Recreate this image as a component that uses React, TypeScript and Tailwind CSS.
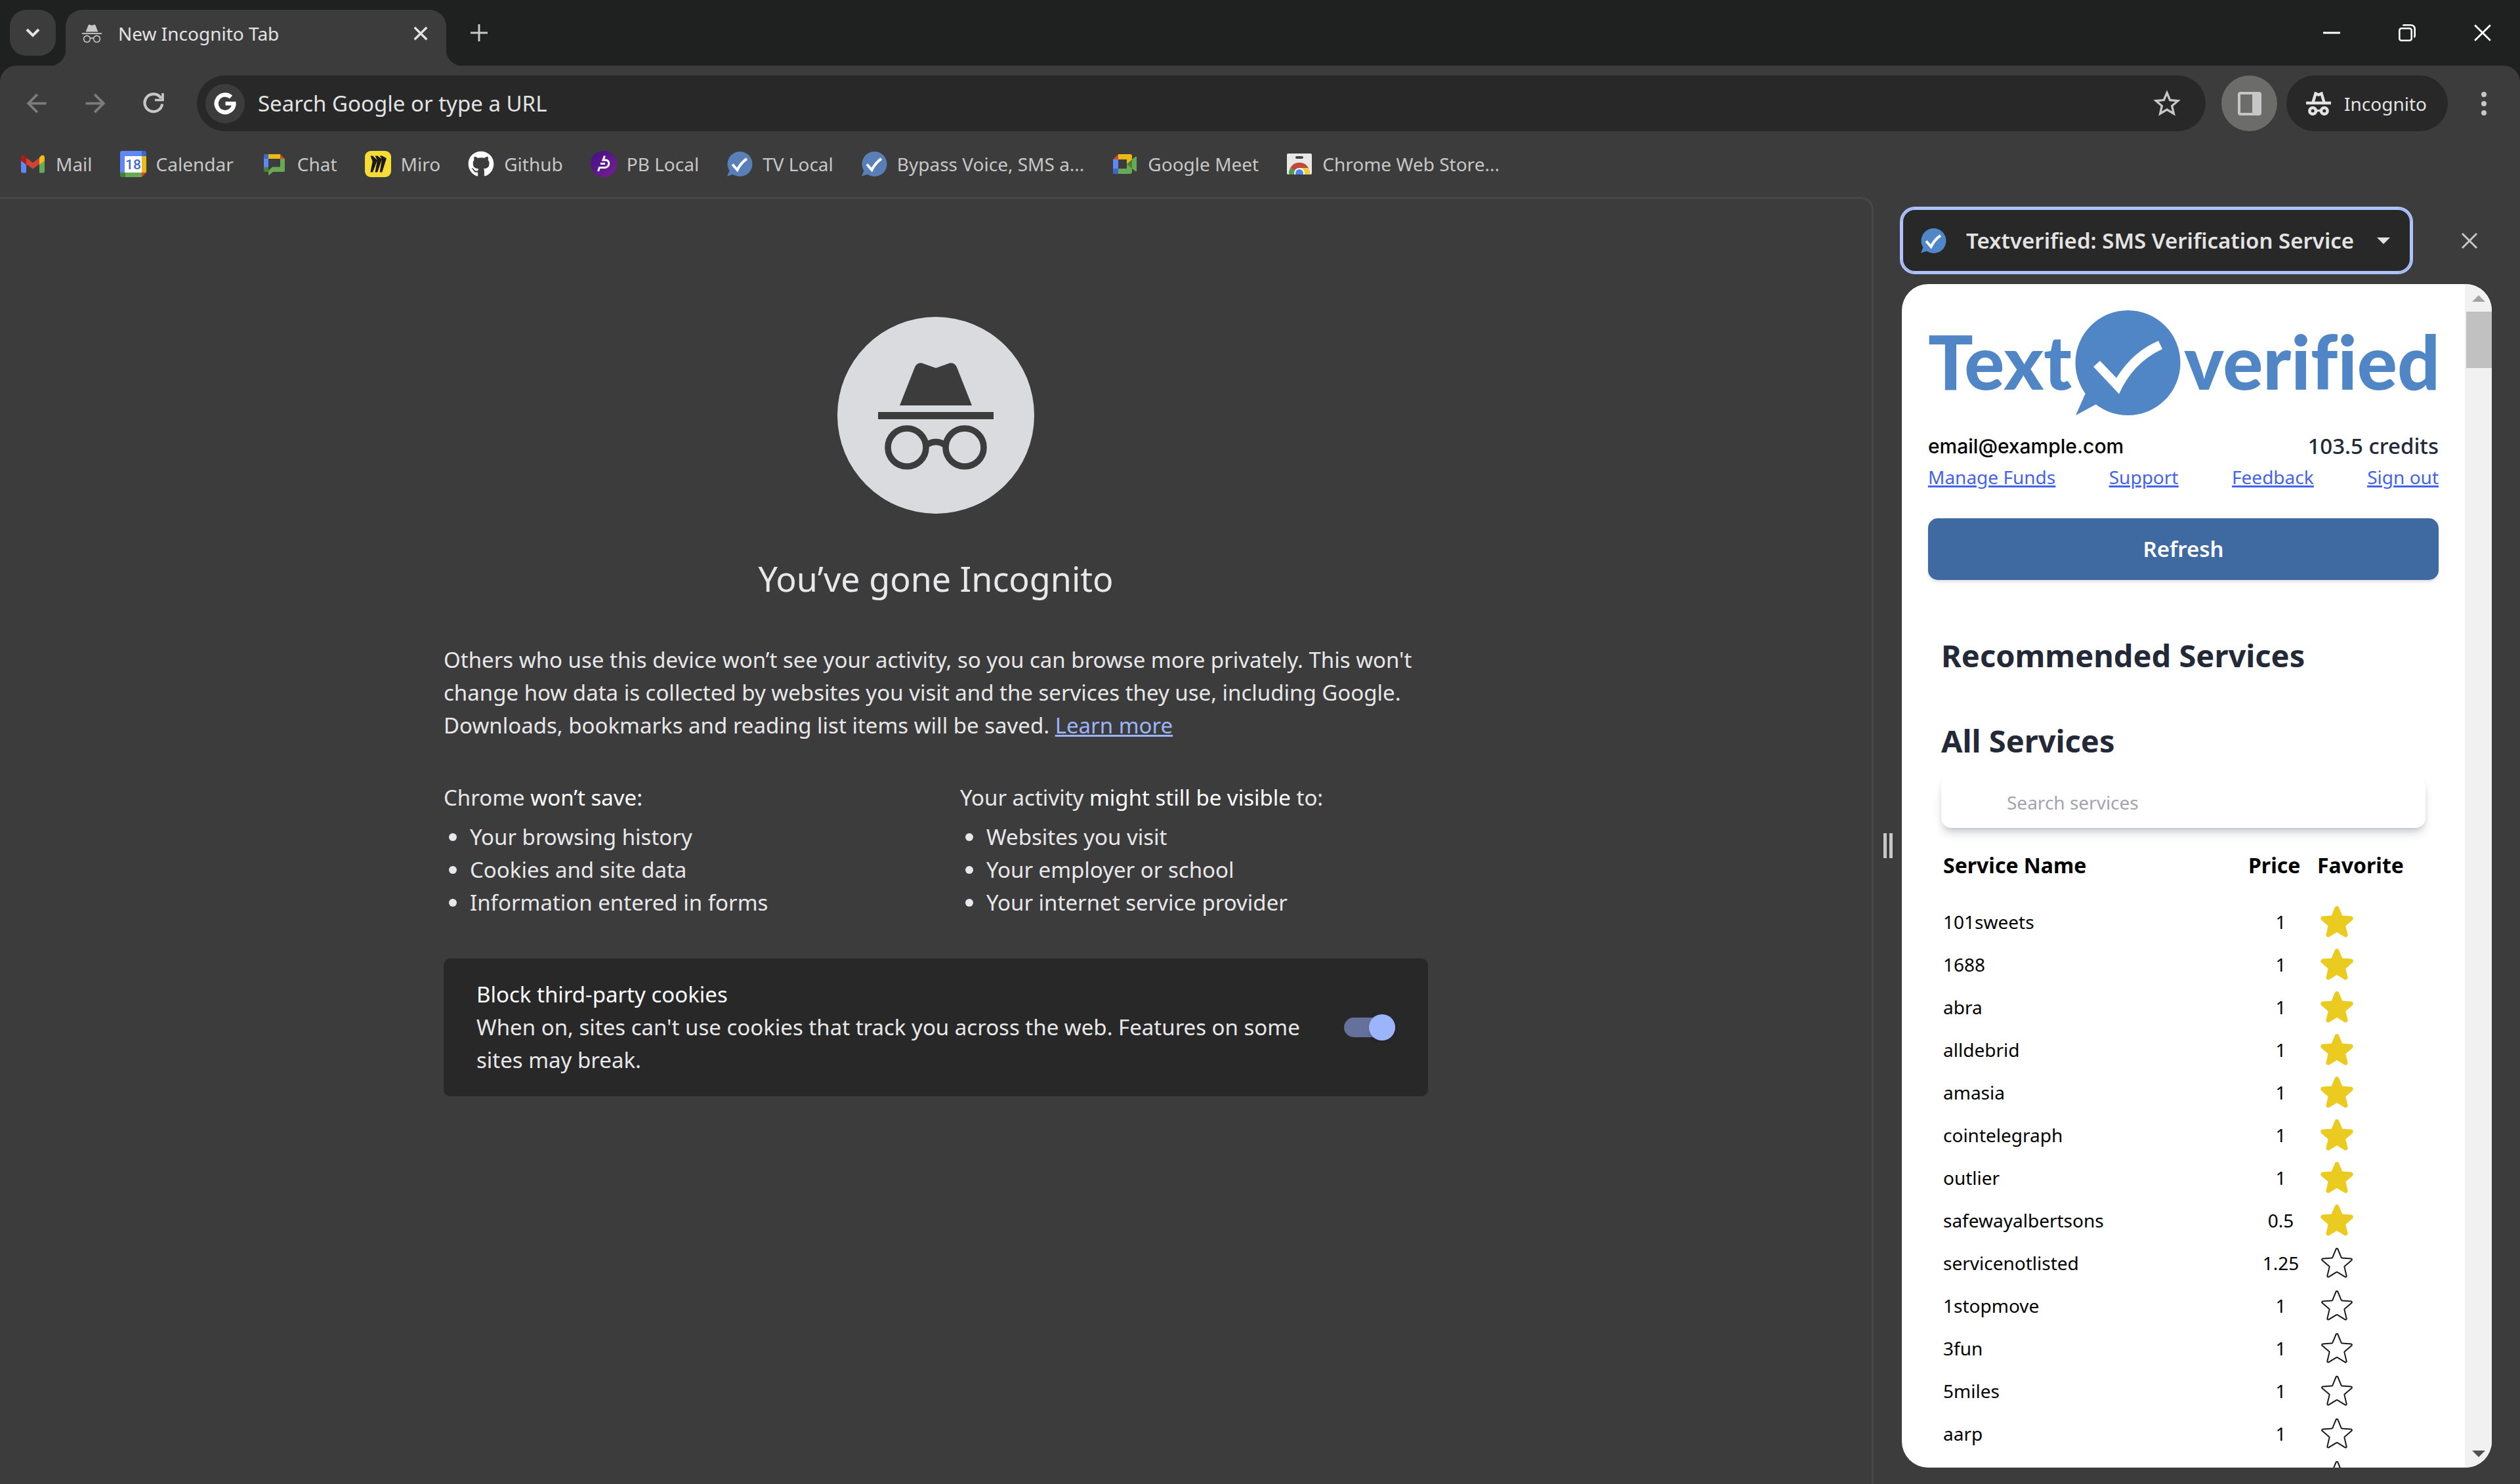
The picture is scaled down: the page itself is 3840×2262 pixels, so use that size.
import React from "react";
import { MdArrowBack, MdArrowForward, MdStarBorder } from "react-icons/md";
import { FaGithub } from "react-icons/fa";

/* ---------- drawings ---------- */

function IncognitoMark({ className, fill }: { className: string; fill: string }) {
  return (
    <svg viewBox="62 62 176 170" className={className} fill={fill} aria-hidden="true">
      <path d="M95 132 L117.5 75 Q121 66 129 67.5 L150 75 L171 67.5 Q179 66 182.5 75 L205 132Z" />
      <rect x="62" y="142" width="176" height="11" />
      <g fill="none" stroke={fill} strokeWidth="9.6">
        <circle cx="106" cy="196" r="29" />
        <circle cx="194" cy="196" r="29" />
        <path d="M136 192 Q150 183 164 192" />
      </g>
    </svg>
  );
}

function IncognitoBadgeIcon() {
  return (
    <svg viewBox="0 0 38 36" className="h-9 w-[38px]" fill="none" stroke="#e3e3e3" aria-hidden="true">
      <path d="M10.5 16 L14.5 2.5 L19 4.6 L23.5 2.5 L27.5 16" strokeWidth="4.4" />
      <path d="M0 17 H38" strokeWidth="4.6" />
      <circle cx="10.2" cy="29" r="4.8" strokeWidth="4.6" />
      <circle cx="27.8" cy="29" r="4.8" strokeWidth="4.6" />
      <path d="M15 28.6 H23" strokeWidth="3.4" />
    </svg>
  );
}

function CrossIcon({ className, width = 3 }: { className: string; width?: number }) {
  return (
    <svg viewBox="0 0 26 26" className={className} fill="none" stroke="currentColor" strokeWidth={width} aria-hidden="true">
      <path d="M2 2 L24 24 M24 2 L2 24" />
    </svg>
  );
}

function BubbleIcon({ fill }: { fill: string }) {
  return (
    <svg viewBox="0 0 40 40" className="size-10" aria-hidden="true">
      <circle cx="20.5" cy="20" r="19" fill={fill} />
      <path d="M5 29 L1 38.5 L13 35Z" fill={fill} />
      <path d="M9 20.5 L16.5 29 Q22 18 31 12" fill="none" stroke="#fff" strokeWidth="4" />
    </svg>
  );
}

function MailIcon() {
  return (
    <svg viewBox="0 0 40 40" className="size-10" aria-hidden="true">
      <path d="M2 14 L10 19 V33.500 H4.500 Q2 33.500 2 31Z" fill="#5f87f5" />
      <path d="M38 14 L30 19 V33.500 H35.500 Q38 33.500 38 31Z" fill="#67a955" />
      <path d="M30 10 L33 7 Q38 5 38 11 V15 L30 21Z" fill="#eebd1b" />
      <path d="M10 10.500 L20 18 L30 10.500 V20 L20 27.500 L10 20Z" fill="#cf4330" />
      <path d="M10 10.500 L7 7 Q2 5 2 11 V15 L10 21Z" fill="#a91d19" />
    </svg>
  );
}

function CalendarIcon() {
  return (
    <svg viewBox="0 0 40 40" className="size-10" aria-hidden="true">
      <path d="M3 0 H33 V8 H8 V33 H0 V3 Q0 0 3 0Z" fill="#5f87f5" />
      <path d="M33 0 H37 Q40 0 40 3 V8 H33Z" fill="#3d66d0" />
      <path d="M33 8 H40 V33 H33Z" fill="#eab914" />
      <path d="M8 33 H33 V40 H8Z" fill="#67a955" />
      <path d="M0 33 H8 V40 H3 Q0 40 0 37Z" fill="#488038" />
      <path d="M33 33 H40 L33 40Z" fill="#d64432" />
      <path d="M7 8 H33 V33 H7Z" fill="#fff" />
      <text x="20" y="28" textAnchor="middle" fontFamily="Roboto, sans-serif" fontSize="21" fontWeight="500" fill="#3f68d4">18</text>
    </svg>
  );
}

function ChatIcon() {
  return (
    <svg viewBox="0 0 40 40" className="size-10" aria-hidden="true">
      <g transform="translate(4 5)">
        <path d="M2 0 H7 V7 H0 V2 Q0 0 2 0Z" fill="#3d66d0" />
        <path d="M0 7 H7 V20 H0Z" fill="#5f87f5" />
        <path d="M7 0 H25 V7 H7Z" fill="#eab914" />
        <path d="M25 0 L32 7 H25Z" fill="#d64432" />
        <path d="M0 20 H7 V27 H2 Q0 27 0 25Z" fill="#488038" />
        <path d="M25 7 H32 V25 Q32 27 30 27 H14 L8 32 Q7 32.500 7 31 V25 L13 19.500 H25Z" fill="#67a955" />
      </g>
    </svg>
  );
}

function MiroIcon() {
  return (
    <svg viewBox="0 0 40 40" className="size-10" aria-hidden="true">
      <rect width="40" height="40" rx="9" fill="#f6dc37" />
      <path
        transform="translate(8.500 7.500) scale(1.02 1.04)"
        d="M17.392 0H13.9L17 4.808 10.444 0H6.949l3.102 6.3L3.494 0H0l3.05 8.131L0 24h3.494L10.05 6.985 6.949 24h3.494L17 5.494 13.899 24h3.493L24 3.672 17.392 0z"
        fill="#1b1a17"
      />
    </svg>
  );
}

function PbIcon() {
  return (
    <svg viewBox="0 0 40 40" className="size-10" aria-hidden="true">
      <defs>
        <linearGradient id="pb-fill" x1="0" y1="0" x2="1" y2="1">
          <stop offset="0" stopColor="#3f0f86" />
          <stop offset="1" stopColor="#7a2090" />
        </linearGradient>
      </defs>
      <circle cx="20" cy="20" r="20" fill="url(#pb-fill)" />
      <g fill="none" stroke="#fff" strokeWidth="3">
        <path d="M21.500 7.500 L19 14 H23 C30 14 29.500 25.500 21 25.500 H13.500 L11.500 31" />
        <path d="M15 19.500 H22" />
      </g>
    </svg>
  );
}

function MeetIcon() {
  return (
    <svg viewBox="0 0 40 40" className="size-10" aria-hidden="true">
      <g transform="translate(2 5)">
        <path d="M8 0 V8 H0Z" fill="#d64432" />
        <path d="M0 8 H8 V22 H0Z" fill="#5f87f5" />
        <path d="M0 22 H8 V30 H2 Q0 30 0 28Z" fill="#3d66d0" />
        <path d="M8 0 H26 Q29 0 29 3 V9 L21 16 V8 H8Z" fill="#eab914" />
        <path d="M8 22 H21 V14 L29 21 V27 Q29 30 26 30 H8Z" fill="#67a955" />
        <path d="M21 15 L29 8 V22Z" fill="#488038" />
        <path d="M29 8 L34 4 Q36 3 36 5 V25 Q36 27 34 26 L29 22Z" fill="#67a955" />
      </g>
    </svg>
  );
}

function StoreIcon() {
  return (
    <svg viewBox="0 0 40 40" className="size-10" aria-hidden="true">
      <defs>
        <clipPath id="store-clip">
          <rect x="1" y="4" width="38" height="32" rx="2" />
        </clipPath>
      </defs>
      <g clipPath="url(#store-clip)">
        <rect x="1" y="4" width="38" height="32" fill="#e8e8e8" />
        <rect x="14" y="8" width="12" height="4" rx="2" fill="#444" />
        <path d="M20 34 L6.100 26 A16 16 0 0 1 34 26Z" fill="#c34a38" />
        <path d="M20 34 L6.500 25.500 A16 16 0 0 0 4 36 H16Z" fill="#549a52" />
        <path d="M20 26 H33.900 A16 16 0 0 1 36 36 H20Z" fill="#f0cb3e" />
        <circle cx="20" cy="34" r="8" fill="#fff" />
        <circle cx="20" cy="34" r="6" fill="#4f82ec" />
      </g>
    </svg>
  );
}

function ReloadIcon() {
  return (
    <svg viewBox="0 0 34 34" className="size-[34px]" fill="none" stroke="#c7c7c7" aria-hidden="true">
      <path d="M29.200 17.500 A13.400 13.400 0 1 1 27.500 9" strokeWidth="4.2" />
      <path d="M30 1 V11.500 H18" strokeWidth="3.6" />
    </svg>
  );
}

function GoogleG() {
  return (
    <svg viewBox="0 0 34 34" className="size-[34px]" fill="none" stroke="#fff" aria-hidden="true">
      <path d="M26 7 A13.300 13.300 0 1 0 30.300 17.500" strokeWidth="6.4" />
      <path d="M17.500 16.800 H33.500" strokeWidth="5.8" />
    </svg>
  );
}

function Logo() {
  return (
    <svg viewBox="0 0 778 160" className="w-full overflow-visible" role="img" aria-label="Textverified">
      <g
        fill="#5086c5"
        fontFamily="Lato, sans-serif"
        fontWeight="900"
        fontSize="114"
        className="[font-variant-ligatures:none]"
      >
        <text x="0" y="121">Text</text>
        <text x="780" y="121" textAnchor="end">verified</text>
      </g>
      <circle cx="304.500" cy="80" r="80" fill="#5086c5" />
      <path d="M241 124 L225 160 L262 140Z" fill="#5086c5" />
      <path d="M252 86 L262 77 L287 103 Q312 63 351 46.500 L357 59 Q312 80 291 127.500Z" fill="#fff" />
    </svg>
  );
}

const STAR =
  "M11.48 3.499a.562.562 0 011.04 0l2.125 5.111a.563.563 0 00.475.345l5.518.442c.499.04.701.663.321.988l-4.204 3.602a.563.563 0 00-.182.557l1.285 5.385a.562.562 0 01-.84.61l-4.725-2.885a.563.563 0 00-.586 0L6.982 20.54a.562.562 0 01-.84-.61l1.285-5.386a.562.562 0 00-.182-.557l-4.204-3.602a.563.563 0 01.321-.988l5.518-.442a.563.563 0 00.475-.345L11.48 3.5z";

function FavoriteStar({ on }: { on: boolean }) {
  return (
    <svg
      viewBox="0 0 24 24"
      className="size-[60px]"
      fill={on ? "#ebcb20" : "none"}
      stroke={on ? "#ebcb20" : "#1a1a1a"}
      strokeWidth={on ? 1.5 : 0.8}
      strokeLinejoin="round"
      aria-hidden="true"
    >
      <path d={STAR} />
    </svg>
  );
}

/* ---------- data ---------- */

const bookmarks = [
  { label: "Mail", icon: <MailIcon /> },
  { label: "Calendar", icon: <CalendarIcon /> },
  { label: "Chat", icon: <ChatIcon /> },
  { label: "Miro", icon: <MiroIcon /> },
  { label: "Github", icon: <FaGithub className="size-10 text-white" aria-hidden="true" /> },
  { label: "PB Local", icon: <PbIcon /> },
  { label: "TV Local", icon: <BubbleIcon fill="#587fb8" /> },
  { label: "Bypass Voice, SMS a...", icon: <BubbleIcon fill="#587fb8" /> },
  { label: "Google Meet", icon: <MeetIcon /> },
  { label: "Chrome Web Store...", icon: <StoreIcon /> },
];

const services = [
  { name: "101sweets", price: "1", favorite: true },
  { name: "1688", price: "1", favorite: true },
  { name: "abra", price: "1", favorite: true },
  { name: "alldebrid", price: "1", favorite: true },
  { name: "amasia", price: "1", favorite: true },
  { name: "cointelegraph", price: "1", favorite: true },
  { name: "outlier", price: "1", favorite: true },
  { name: "safewayalbertsons", price: "0.5", favorite: true },
  { name: "servicenotlisted", price: "1.25", favorite: false },
  { name: "1stopmove", price: "1", favorite: false },
  { name: "3fun", price: "1", favorite: false },
  { name: "5miles", price: "1", favorite: false },
  { name: "aarp", price: "1", favorite: false },
  { name: "", price: "", favorite: false },
];

const notSaved = ["Your browsing history", "Cookies and site data", "Information entered in forms"];
const visibleTo = ["Websites you visit", "Your employer or school", "Your internet service provider"];

/* ---------- sections ---------- */

function TitleBar() {
  return (
    <header className="flex h-[100px] shrink-0 items-start bg-[#1f2120] pl-[15px] pt-[15px]">
      <button aria-label="Search tabs" className="grid size-[70px] place-items-center rounded-[25px] bg-[#3c3c3c]">
        <svg viewBox="0 0 22 14" className="h-3.5 w-[22px]" fill="none" stroke="#e3e3e3" strokeWidth="4" aria-hidden="true">
          <path d="M2 2 L11 11 L20 2" />
        </svg>
      </button>
      <div className="relative ml-[15px] flex h-[85px] w-[580px] rounded-t-[25px] bg-[#3c3c3c] before:absolute before:-left-[25px] before:bottom-0 before:size-[25px] before:bg-[radial-gradient(circle_at_0_0,transparent_25px,#3c3c3c_26px)] after:absolute after:-right-[25px] after:bottom-0 after:size-[25px] after:bg-[radial-gradient(circle_at_100%_0,transparent_25px,#3c3c3c_26px)]">
        <div className="flex h-[72px] flex-1 items-center pl-[25px] pr-[28px]">
          <IncognitoMark className="h-[30px] w-[30px]" fill="#c7c7c7" />
          <span className="ml-[25px] flex-1 text-[28px] text-[#e3e3e3]">New Incognito Tab</span>
          <button aria-label="Close tab" className="text-[#e3e3e3]">
            <CrossIcon className="size-[22px]" width={4} />
          </button>
        </div>
      </div>
      <button aria-label="New tab" className="ml-[15px] grid size-[70px] place-items-center">
        <svg viewBox="0 0 26 26" className="size-[26px]" stroke="#c7c7c7" strokeWidth="3" aria-hidden="true">
          <path d="M13 0 V26 M0 13 H26" />
        </svg>
      </button>
      <div className="ml-auto flex text-white">
        <button aria-label="Minimize" className="grid h-[70px] w-[115px] place-items-center">
          <svg viewBox="0 0 26 26" className="size-[26px]" stroke="currentColor" strokeWidth="3" aria-hidden="true">
            <path d="M0 13 H26" />
          </svg>
        </button>
        <button aria-label="Restore" className="grid h-[70px] w-[115px] place-items-center">
          <svg viewBox="0 0 26 26" className="size-[26px]" fill="none" stroke="currentColor" strokeWidth="2.6" aria-hidden="true">
            <rect x="1.300" y="6.300" width="18.400" height="18.400" rx="3" />
            <path d="M6.500 2 Q7 1.300 9 1.300 H18 Q24.700 1.300 24.700 8 V17 Q24.700 19 23.500 20" />
          </svg>
        </button>
        <button aria-label="Close window" className="grid h-[70px] w-[115px] place-items-center">
          <CrossIcon className="size-7" width={2.6} />
        </button>
      </div>
    </header>
  );
}

function Toolbar() {
  return (
    <div className="shrink-0 bg-[#1f2120]">
      <div className="rounded-t-[25px] bg-[#3c3c3c] pt-[15px]">
        <nav className="flex h-[85px] items-center pl-2.5" aria-label="Navigation">
          <button aria-label="Back" disabled className="grid h-full w-[90px] place-items-center text-[#7c7c7c]">
            <MdArrowBack className="size-[45px]" aria-hidden="true" />
          </button>
          <button aria-label="Forward" disabled className="grid h-full w-[90px] place-items-center text-[#7c7c7c]">
            <MdArrowForward className="size-[45px]" aria-hidden="true" />
          </button>
          <button aria-label="Reload" className="grid h-full w-[90px] place-items-center">
            <ReloadIcon />
          </button>
          <div className="ml-5 flex h-full flex-1 items-center rounded-full bg-[#282828] pl-[13px] pr-[34px]">
            <span className="grid size-[60px] place-items-center rounded-full bg-[#3c3c3c]">
              <GoogleG />
            </span>
            <input
              type="text"
              aria-label="Address and search bar"
              placeholder="Search Google or type a URL"
              className="ml-5 h-full flex-1 bg-transparent text-[33px] text-[#e3e3e3] outline-none placeholder:text-[#e3e3e3]"
            />
            <button aria-label="Bookmark this tab" className="text-[#c7c7c7]">
              <MdStarBorder className="size-[50px]" aria-hidden="true" />
            </button>
          </div>
          <button aria-label="Side panel" className="ml-6 grid size-[85px] place-items-center rounded-full bg-[#6c6c6a]">
            <svg viewBox="0 0 36 36" className="size-9" aria-hidden="true">
              <rect width="36" height="36" rx="4" fill="#c7c7c7" />
              <rect x="4" y="4" width="18" height="28" fill="#6c6c6a" />
            </svg>
          </button>
          <button className="ml-3.5 flex h-full w-[246px] items-center gap-5 rounded-full bg-[#282828] pl-[30px] text-[28px] text-[#e3e3e3]">
            <IncognitoBadgeIcon />
            Incognito
          </button>
          <button aria-label="Menu" className="grid h-full w-[110px] place-items-center">
            <svg viewBox="0 0 8 36" className="h-9 w-2" fill="#c7c7c7" aria-hidden="true">
              <circle cx="4" cy="4" r="4" />
              <circle cx="4" cy="18" r="4" />
              <circle cx="4" cy="32" r="4" />
            </svg>
          </button>
        </nav>
        <nav className="flex h-[100px] gap-[42px] pl-[30px] text-[28px] text-[#c7c7c7]" aria-label="Bookmarks">
          {bookmarks.map((b) => (
            <a key={b.label} href="#" className="flex items-center gap-[15px] whitespace-nowrap">
              {b.icon}
              {b.label}
            </a>
          ))}
        </nav>
      </div>
    </div>
  );
}

function InfoList({ items }: { items: string[] }) {
  return (
    <ul className="mt-2.5">
      {items.map((item) => (
        <li key={item} className="flex items-center pl-2 before:mr-5 before:size-3 before:rounded-full before:bg-[#e8e8ea]">
          {item}
        </li>
      ))}
    </ul>
  );
}

function IncognitoPage() {
  return (
    <main className="flex-1 overflow-hidden rounded-tr-[20px] border-r-[3px] border-t-[3px] border-[#474847]">
      <div className="mx-auto flex max-w-[1500px] flex-col pt-[180px] text-[33px] leading-[50px] text-[#e8e8ea]">
        <div className="grid size-[300px] place-items-center self-center rounded-full bg-[#dadbdf]">
          <IncognitoMark className="h-[170px] w-[176px]" fill="#3c3c3c" />
        </div>
        <h1 className="mt-16 text-center text-[52px] leading-[70px]">You’ve gone Incognito</h1>
        <p className="mt-16">
          Others who use this device won’t see your activity, so you can browse more privately. This won't change how
          data is collected by websites you visit and the services they use, including Google. Downloads, bookmarks
          and reading list items will be saved.{" "}
          <a href="#" className="text-[#9db4f8] underline decoration-3">
            Learn more
          </a>
        </p>
        <div className="mt-[60px] grid grid-cols-2 gap-x-[74px]">
          <section>
            <h2>
              Chrome <em className="not-italic text-white">won’t save:</em>
            </h2>
            <InfoList items={notSaved} />
          </section>
          <section>
            <h2>
              Your activity <em className="not-italic text-white">might still be visible</em> to:
            </h2>
            <InfoList items={visibleTo} />
          </section>
        </div>
        <div className="mt-[60px] flex items-center gap-6 rounded-[10px] bg-[#282828] px-[50px] py-[30px]">
          <label htmlFor="block-cookies" className="flex-1">
            <span className="block text-white">Block third-party cookies</span>
            When on, sites can't use cookies that track you across the web. Features on some sites may break.
          </label>
          <input
            id="block-cookies"
            type="checkbox"
            role="switch"
            defaultChecked
            className="relative h-[30px] w-[78px] appearance-none rounded-full bg-[#65709b] before:absolute before:-top-[5px] before:right-0 before:size-10 before:rounded-full before:bg-[#9bb4fa] before:shadow-md"
          />
        </div>
      </div>
    </main>
  );
}

function ServicesTable() {
  return (
    <table className="mt-8 w-full table-fixed text-left text-black">
      <colgroup>
        <col />
        <col className="w-[105px]" />
        <col className="w-[168px]" />
      </colgroup>
      <thead>
        <tr className="text-[32px] leading-[50px]">
          <th scope="col" className="pb-7 pl-[3px] font-bold">Service Name</th>
          <th scope="col" className="pb-7 pl-[3px] font-bold">Price</th>
          <th scope="col" className="pb-7 pl-[3px] font-bold">Favorite</th>
        </tr>
      </thead>
      <tbody>
        {services.map((s, i) => (
          <tr key={i} className="h-[65px] text-[28px]">
            <td className="py-0 pl-[3px]">{s.name}</td>
            <td className="py-0 text-center">{s.price}</td>
            <td className="py-0 pl-[3px]">
              <button aria-label="Toggle favorite" aria-pressed={s.favorite} className="block">
                <FavoriteStar on={s.favorite} />
              </button>
            </td>
          </tr>
        ))}
      </tbody>
    </table>
  );
}

function ExtensionPanel() {
  return (
    <div className="mt-[18px] flex min-h-0 flex-1 overflow-hidden rounded-[40px] bg-white">
      <div className="flex-1 overflow-hidden px-10 pt-10">
        <Logo />
        <div className="mt-[22px] flex justify-between leading-[50px]">
          <span className="font-[Inter] text-[30px] font-medium text-black">email@example.com</span>
          <span className="text-[33px] font-medium text-[#1f2937]">103.5 credits</span>
        </div>
        <nav className="flex justify-between text-[28px] leading-[45px] text-[#4463ec] underline decoration-3" aria-label="Account">
          <a href="#">Manage Funds</a>
          <a href="#">Support</a>
          <a href="#">Feedback</a>
          <a href="#">Sign out</a>
        </nav>
        <button className="mt-10 h-[94px] w-full rounded-[15px] bg-[#3f69a1] text-[33px] font-semibold text-white shadow-md">
          Refresh
        </button>
        <div className="px-5 pt-20">
          <h2 className="text-[47px] font-bold leading-[70px] text-[#232937]">Recommended Services</h2>
          <h2 className="mt-[60px] text-[47px] font-bold leading-[70px] text-[#232937]">All Services</h2>
          <input
            type="search"
            aria-label="Search services"
            placeholder="Search services"
            className="mt-5 h-[78px] w-full rounded-[15px] bg-white px-[100px] text-[28px] text-black shadow-[0_10px_15px_-3px_#1f293733,0_4px_10px_-4px_#1f293733] placeholder:text-[#a2a5b0]"
          />
          <ServicesTable />
        </div>
      </div>
      <div className="flex w-[41px] flex-col items-center bg-[#f1f1f1] pt-[17px]" aria-hidden="true">
        <svg viewBox="0 0 20 10" className="h-2.5 w-5" fill="#a3a3a3">
          <path d="M10 0 L20 10 H0Z" />
        </svg>
        <div className="mt-[15px] h-[86px] w-[39px] self-end bg-[#c1c1c1]" />
        <svg viewBox="0 0 20 10" className="mb-4 mt-auto h-2.5 w-5" fill="#505050">
          <path d="M10 10 L20 0 H0Z" />
        </svg>
      </div>
    </div>
  );
}

function SidePanel() {
  return (
    <aside className="flex w-[985px] shrink-0 pr-[43px]">
      <div className="flex w-[43px] items-center justify-center gap-1 pt-4" aria-hidden="true">
        <span className="h-[38px] w-[5px] bg-[#c7c7c7]" />
        <span className="h-[38px] w-[5px] bg-[#c7c7c7]" />
      </div>
      <div className="flex min-w-0 flex-1 flex-col pb-[25px] pt-[18px]">
        <div className="flex items-center gap-[55px]">
          <div className="relative flex-1">
            <select
              aria-label="Side panel page"
              className="h-[97px] w-full appearance-none rounded-[20px] border-2 border-[#aec2fc] bg-[#282828] pl-24 text-[33px] font-semibold text-[#e3e3e3] outline-3 outline-[#aec2fc]"
            >
              <option>Textverified: SMS Verification Service</option>
            </select>
            <span className="pointer-events-none absolute inset-y-0 left-7 flex items-center">
              <BubbleIcon fill="#4f87c8" />
            </span>
            <span className="pointer-events-none absolute inset-y-0 right-8 flex items-center">
              <svg viewBox="0 0 20 10" className="h-2.5 w-5" fill="#e3e3e3" aria-hidden="true">
                <path d="M0 0 H20 L10 10Z" />
              </svg>
            </span>
          </div>
          <button aria-label="Close side panel" className="grid size-[68px] place-items-center text-[#c7c7c7]">
            <CrossIcon className="size-[26px]" width={3} />
          </button>
        </div>
        <ExtensionPanel />
      </div>
    </aside>
  );
}

export default function App() {
  return (
    <div className="flex h-screen flex-col overflow-hidden bg-[#3c3c3c] font-['Noto_Sans',sans-serif]">
      <TitleBar />
      <Toolbar />
      <div className="flex min-h-0 flex-1">
        <IncognitoPage />
        <SidePanel />
      </div>
    </div>
  );
}
